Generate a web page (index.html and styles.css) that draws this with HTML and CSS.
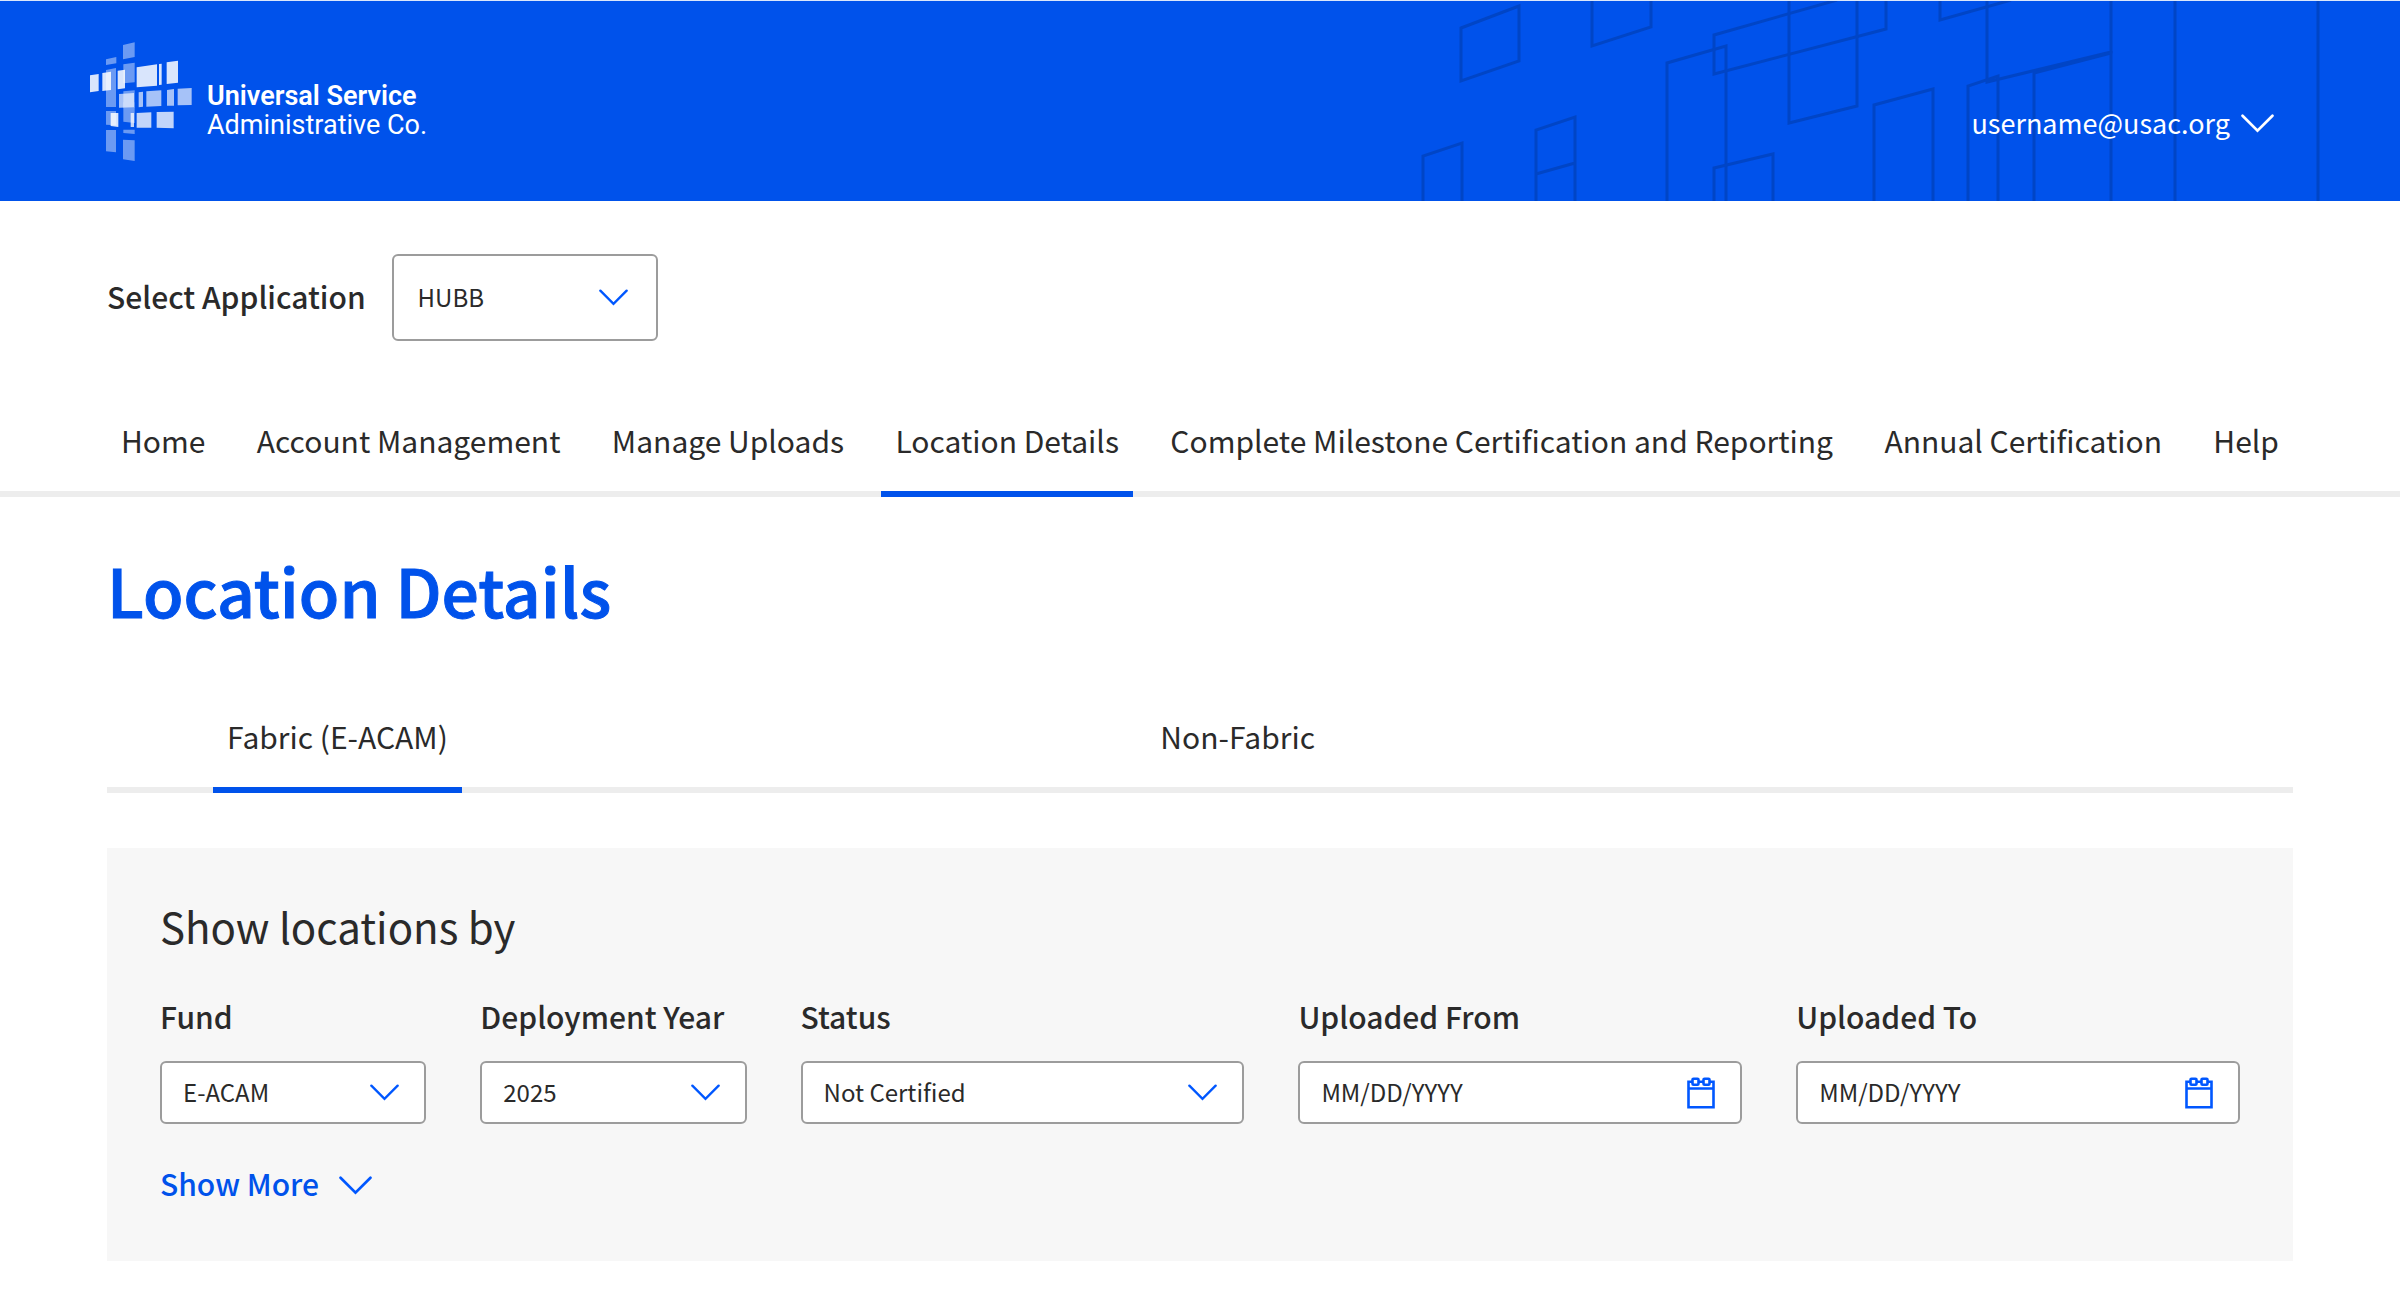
FILE: index.html
```html
<!DOCTYPE html>
<html lang="en">
<head>
  <meta charset="utf-8">
  <meta name="viewport" content="width=device-width, initial-scale=1">
  <title>Location Details</title>
  <link rel="stylesheet" href="styles.css">
</head>
<body>
  <svg class="sprite" aria-hidden="true">
    <symbol id="chevron" viewBox="0 0 32 18">
      <path d="M1.5 1.5 16 16 30.5 1.5" fill="none" stroke="currentColor" stroke-width="2.6" stroke-linecap="round"/>
    </symbol>
    <symbol id="calendar" viewBox="0 0 28 32">
      <g fill="none" stroke="currentColor" stroke-width="2.6">
        <path d="M5.5 4.8H1.5V30.2H26.5V4.8H22.5M11.5 4.8H16.5M1.5 11.5H26.5"/>
        <rect x="5.5" y="1.8" width="6" height="6" rx="1"/>
        <rect x="16.5" y="1.8" width="6" height="6" rx="1"/>
      </g>
    </symbol>
  </svg>

  <header class="header">
    <svg class="header-pattern" viewBox="0 1 1000 200" aria-hidden="true">
      <g fill="none" stroke="#0045c6" stroke-width="3">
        <path d="M61 28 119 6V61L61 81Z"/>
        <path d="M192 0V46L251 27V0"/>
        <path d="M23 201V156L62 143V201"/>
        <path d="M136 201V130L175 117V201M136 174 175 163"/>
        <path d="M267 201V63L326 46V201"/>
        <path d="M437 0 314 35V74L486 29V0"/>
        <path d="M389 0V123L457 106V0"/>
        <path d="M314 201V168L373 154V201"/>
        <path d="M474 201V105L533 89V201"/>
        <path d="M540 0V20L611 0"/>
        <path d="M587 0V82L711 52V0"/>
        <path d="M568 201V86L598 76V201"/>
        <path d="M634 201V73L711 53V201"/>
        <path d="M775 0V201M918 0V201"/>
      </g>
    </svg>
    <div class="header-bar">
      <a class="brand" href="#">
        <svg class="brand-mark" viewBox="60 66 306 357" aria-hidden="true">
          <g fill="#fff">
            <g opacity=".42">
              <path d="M159 75 194 67V111L159 118Z"/>
              <path d="M108 118 139 111V130L108 135Z"/>
              <path d="M108 150 138 144V261H108Z"/>
              <path d="M160 133 194 128V187L160 190Z"/>
              <path d="M160 214 194 211V263H160Z"/>
              <path d="M108 273H138V316L108 314Z"/>
              <path d="M160 247H194V309L160 305Z"/>
              <path d="M160 329H194V342L160 339Z"/>
              <path d="M108 330H138V397L108 394Z"/>
              <path d="M159 359 194 361V423L159 418Z"/>
            </g>
            <g opacity=".85">
              <path d="M60 166 86 162V213L60 217Z"/>
              <path d="M97 159 123 155V210L97 213Z"/>
              <path d="M143 152 165 149V205L143 208Z"/>
              <path d="M200 142 261 133V197L200 202Z"/>
              <path d="M267 132 275 131V194L267 195Z"/>
              <path d="M290 127 324 122V188L290 192Z"/>
              <path d="M122 279H145V321L122 318Z"/>
            </g>
            <g opacity=".65">
              <path d="M147 222 192 219V262L147 263Z"/>
              <path d="M206 217 219 215V260L206 262Z"/>
              <path d="M229 214 274 211V258L229 260Z"/>
              <path d="M291 210 312 207V257H291Z"/>
              <path d="M323 206 365 204V255L323 256Z"/>
            </g>
            <g opacity=".76">
              <path d="M182 279H192V321H182Z"/>
              <path d="M200 279 244 277V323H200Z"/>
              <path d="M260 276 311 275V325L260 323Z"/>
            </g>
          </g>
        </svg>
        <span class="brand-name"><strong>Universal Service</strong><span>Administrative Co.</span></span>
      </a>
      <button class="account" type="button">username@usac.org <svg class="chevron chevron-large" aria-hidden="true"><use href="#chevron"/></svg></button>
    </div>
  </header>

  <div class="application">
    <label class="label" for="application">Select Application</label>
    <div class="control control-tall">
      <select id="application"><option>HUBB</option></select>
      <svg class="chevron" aria-hidden="true"><use href="#chevron"/></svg>
    </div>
  </div>

  <nav class="nav" aria-label="Main">
    <a class="tab" href="#">Home</a>
    <a class="tab" href="#">Account Management</a>
    <a class="tab" href="#">Manage Uploads</a>
    <a class="tab tab-active" href="#" aria-current="page">Location Details</a>
    <a class="tab" href="#">Complete Milestone Certification and Reporting</a>
    <a class="tab" href="#">Annual Certification</a>
    <a class="tab" href="#">Help</a>
  </nav>

  <main class="main">
    <h1 class="title">Location Details</h1>

    <nav class="subnav" aria-label="Location type">
      <a class="tab tab-active" href="#" aria-current="page">Fabric (E-ACAM)</a>
      <a class="tab" href="#">Non-Fabric</a>
    </nav>

    <form class="panel">
      <h2 class="panel-title">Show locations by</h2>
      <div class="filters">
        <div class="field">
          <label class="label" for="fund">Fund</label>
          <div class="control">
            <select id="fund"><option>E-ACAM</option></select>
            <svg class="chevron" aria-hidden="true"><use href="#chevron"/></svg>
          </div>
        </div>
        <div class="field">
          <label class="label" for="year">Deployment Year</label>
          <div class="control">
            <select id="year"><option>2025</option></select>
            <svg class="chevron" aria-hidden="true"><use href="#chevron"/></svg>
          </div>
        </div>
        <div class="field">
          <label class="label" for="status">Status</label>
          <div class="control">
            <select id="status"><option>Not Certified</option></select>
            <svg class="chevron" aria-hidden="true"><use href="#chevron"/></svg>
          </div>
        </div>
        <div class="field">
          <label class="label" for="from">Uploaded From</label>
          <div class="control">
            <input id="from" type="text" placeholder="MM/DD/YYYY">
            <svg class="calendar" aria-hidden="true"><use href="#calendar"/></svg>
          </div>
        </div>
        <div class="field">
          <label class="label" for="to">Uploaded To</label>
          <div class="control">
            <input id="to" type="text" placeholder="MM/DD/YYYY">
            <svg class="calendar" aria-hidden="true"><use href="#calendar"/></svg>
          </div>
        </div>
      </div>
      <button class="more" type="button">Show More <svg class="chevron chevron-large" aria-hidden="true"><use href="#chevron"/></svg></button>
    </form>
  </main>
</body>
</html>
```
FILE: styles.css
```css
:root {
  --blue: #0052eb;
  --icon: #0057ff;
  --ink: #2a2a2a;
  --line: #ededed;
  --gutter: 107px;
}

* { box-sizing: border-box; }

body {
  margin: 0;
  background: #fff;
  color: var(--ink);
  font-family: "Noto Sans CJK SC", sans-serif;
  font-size: 30px;
  line-height: 40px;
}

a { color: inherit; text-decoration: none; }

button {
  border: 0;
  padding: 0;
  background: none;
  font-family: inherit;
  line-height: inherit;
}

.sprite { display: none; }

/* Header */
.header {
  display: grid;
  border-top: 1px solid #dbe7fb;
  background: var(--blue);
  color: #fff;
}

.header-pattern,
.header-bar { grid-area: 1 / 1; }

.header-pattern {
  justify-self: end;
  width: 1000px;
  height: 200px;
}

.header-bar {
  display: flex;
  align-items: center;
  justify-content: space-between;
  padding: 0 126px 0 90px;
}

.brand {
  display: flex;
  align-items: center;
  gap: 15px;
}

.brand-mark { width: 102px; height: 119px; }

.brand-name {
  display: flex;
  flex-direction: column;
  padding-top: 20px;
  font-family: Roboto, sans-serif;
  font-size: 27px;
  line-height: 29px;
}

.brand-name strong { font-weight: 600; }

.account {
  display: flex;
  align-items: center;
  gap: 11px;
  padding-top: 44px;
  color: #fff;
  font-size: 27px;
}

/* Icons */
.chevron {
  width: 29px;
  height: 17px;
  color: var(--icon);
}

.chevron-large { width: 33px; height: 19px; }

.account .chevron { color: #fff; }

.calendar {
  width: 28px;
  height: 32px;
  color: var(--icon);
}

/* Form controls */
.label { font-weight: 500; }

.control {
  display: grid;
  align-items: center;
  height: 63px;
}

.control > * { grid-area: 1 / 1; }

.control select,
.control input {
  appearance: none;
  width: 100%;
  height: 100%;
  margin: 0;
  padding: 0 60px 2px 21px;
  border: 2px solid #9c9c9c;
  border-radius: 6px;
  background: #fff;
  color: inherit;
  font-family: inherit;
  font-size: 24px;
}

.control input::placeholder { color: inherit; opacity: 1; }

.control svg {
  justify-self: end;
  margin-right: 27px;
  pointer-events: none;
}

.control-tall { width: 266px; height: 87px; }
.control-tall select { padding-left: 24px; }
.control-tall svg { margin-right: 30px; }

.application {
  display: flex;
  align-items: center;
  gap: 26px;
  padding: 53px var(--gutter) 79px;
}

.application .label { padding-bottom: 4px; }

/* Tabs */
.nav {
  display: flex;
  justify-content: space-between;
  padding: 0 var(--gutter);
  border-bottom: 6px solid var(--line);
}

.tab {
  margin-bottom: -6px;
  padding: 0 14px 31px;
  border-bottom: 6px solid transparent;
}

.tab-active { border-bottom-color: var(--blue); }

.main { padding: 52px var(--gutter) 53px; }

.title {
  margin: 0;
  color: var(--blue);
  font-size: 66px;
  font-weight: 500;
  line-height: 80px;
  -webkit-text-stroke: 1px currentColor;
}

.subnav {
  display: grid;
  grid-template-columns: 35fr 43fr;
  justify-items: start;
  margin: 87px 0 55px;
  padding-left: 106px;
  border-bottom: 6px solid var(--line);
}

/* Filter panel */
.panel {
  padding: 48px 53px 58px;
  background: #f7f7f7;
}

.panel-title {
  margin: 0 0 40px;
  font-size: 42px;
  font-weight: 400;
  line-height: 60px;
}

.filters {
  display: grid;
  grid-template-columns: 3fr 3fr 5fr 5fr 5fr;
  gap: 54px;
}

.field {
  display: flex;
  flex-direction: column;
  gap: 25px;
}

.more {
  display: flex;
  align-items: center;
  gap: 20px;
  margin-top: 39px;
  color: var(--blue);
  font-size: 30px;
  font-weight: 500;
}

.more .chevron { margin-top: 4px; }
```
